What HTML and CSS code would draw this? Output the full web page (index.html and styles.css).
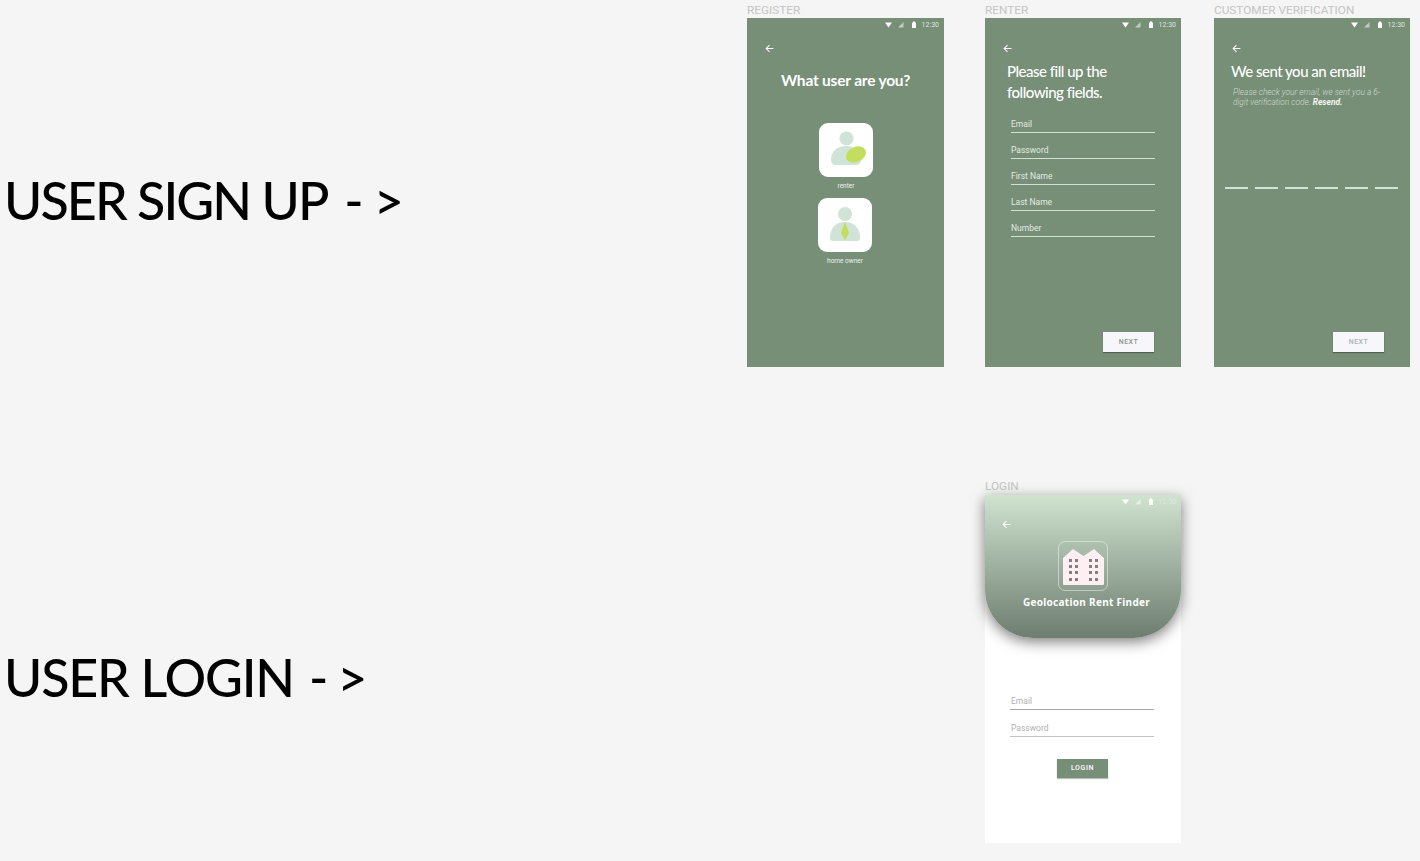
FILE: index.html
```html
<!DOCTYPE html>
<html>
<head>
  <meta charset="utf-8">
  <title>Geolocation Rent Finder</title>
  <link rel="stylesheet" href="styles.css">
</head>
<body>
  <svg class="defs" width="0" height="0">
    <symbol id="status" viewBox="0 0 31 8">
      <path d="M0 1.500h7L3.500 6.500z" fill="#fff"/>
      <path d="M13 6.500l5.500-5.500v5.500z" fill="#fff" opacity=".55"/>
      <path d="M27 1.500h1v-1h2v1h1v5.500h-4z" fill="#fff"/>
    </symbol>
    <symbol id="back" viewBox="0 0 8 8">
      <path d="M7.500 4H1.200M4 1L1 4l3 3" fill="none" stroke="#fff" stroke-width=".9"/>
    </symbol>
  </svg>

  <h2 class="caption caption-signup">USER SIGN UP <span class="arrow">-&gt;</span></h2>
  <h2 class="caption caption-login">USER LOGIN <span class="arrow">-&gt;</span></h2>

  <section class="board board-register">
    <div class="board-label">REGISTER</div>
    <div class="screen screen-green">
      <div class="status"><svg class="status-icons"><use href="#status"/></svg><span>12:30</span></div>
      <svg class="back"><use href="#back"/></svg>
      <h1 class="ask">What user are you?</h1>
      <div class="choice">
        <div class="tile">
          <svg width="54" height="54" viewBox="0 0 54 54">
            <circle cx="27.500" cy="15.500" r="7" fill="#cfe3d6"/>
            <path d="M12 37c0-9 6.500-14 15-14s15 5 15 14c0 3-2 5-5 5H17c-3 0-5-2-5-5z" fill="#cfe3d6"/>
            <ellipse cx="37" cy="31.500" rx="10.500" ry="7.500" transform="rotate(-25 37 31.500)" fill="#c3dd5c"/>
          </svg>
        </div>
        <span class="tile-name">renter</span>
      </div>
      <div class="choice choice-owner">
        <div class="tile">
          <svg width="54" height="54" viewBox="0 0 54 54">
            <circle cx="27" cy="16" r="7" fill="#cfe3d6"/>
            <path d="M12 40c0-10 6-16 15-16s15 6 15 16c0 2-1 3-3 3H15c-2 0-3-1-3-3z" fill="#cfe3d6"/>
            <path d="M27 24l4 11-4 7-4-7z" fill="#c3dd5c"/>
          </svg>
        </div>
        <span class="tile-name">home owner</span>
      </div>
    </div>
  </section>

  <section class="board board-renter">
    <div class="board-label">RENTER</div>
    <div class="screen screen-green">
      <div class="status"><svg class="status-icons"><use href="#status"/></svg><span>12:30</span></div>
      <svg class="back"><use href="#back"/></svg>
      <h1 class="title">Please fill up the<br>following fields.</h1>
      <div class="fields">
        <div class="field">Email</div>
        <div class="field">Password</div>
        <div class="field">First Name</div>
        <div class="field">Last Name</div>
        <div class="field">Number</div>
      </div>
      <div class="next">NEXT</div>
    </div>
  </section>

  <section class="board board-verify">
    <div class="board-label">CUSTOMER VERIFICATION</div>
    <div class="screen screen-green">
      <div class="status"><svg class="status-icons"><use href="#status"/></svg><span>12:30</span></div>
      <svg class="back"><use href="#back"/></svg>
      <h1 class="title title-verify">We sent you an email!</h1>
      <p class="hint">Please check your email, we sent you a 6-<br>digit verification code. <b>Resend.</b></p>
      <div class="code"><i></i><i></i><i></i><i></i><i></i><i></i></div>
      <div class="next next-dim">NEXT</div>
    </div>
  </section>

  <section class="board board-login">
    <div class="board-label">LOGIN</div>
    <div class="screen screen-white">
      <header class="hero">
        <div class="status"><svg class="status-icons"><use href="#status"/></svg><span>12:30</span></div>
        <svg class="back"><use href="#back"/></svg>
        <div class="logo">
          <svg width="41" height="36" viewBox="0 0 41 36">
            <path d="M0 35V9L10 0l10.500 7L31 0l10 9v26q0 1-1 1H1q-1 0-1-1z" fill="#fdeff2"/>
            <g fill="#857f80">
              <rect x="6" y="10" width="3" height="3"/><rect x="12" y="10" width="3" height="3"/><rect x="26" y="10" width="3" height="3"/><rect x="32" y="10" width="3" height="3"/>
              <rect x="6" y="16" width="3" height="3"/><rect x="12" y="16" width="3" height="3"/><rect x="26" y="16" width="3" height="3"/><rect x="32" y="16" width="3" height="3"/>
              <rect x="6" y="22" width="3" height="3"/><rect x="12" y="22" width="3" height="3"/><rect x="26" y="22" width="3" height="3"/><rect x="32" y="22" width="3" height="3"/>
              <rect x="6" y="29" width="3" height="3"/><rect x="12" y="29" width="3" height="3"/><rect x="26" y="29" width="3" height="3"/><rect x="32" y="29" width="3" height="3"/>
            </g>
          </svg>
        </div>
        <div class="app-name">Geolocation Rent Finder</div>
      </header>
      <div class="fields fields-login">
        <div class="field">Email</div>
        <div class="field">Password</div>
      </div>
      <div class="login-btn">LOGIN</div>
    </div>
  </section>
</body>
</html>
```

FILE: styles.css
```css
html, body {
  margin: 0;
  height: 861px;
  overflow: hidden;
}
body {
  position: relative;
  background: #f5f5f5;
  font-family: Roboto, sans-serif;
}
.defs {
  position: absolute;
}

.caption {
  position: absolute;
  left: 4px;
  margin: 0;
  font-family: Lato, sans-serif;
  font-size: 52px;
  line-height: 60px;
  font-weight: 500;
  letter-spacing: -1.200px;
  color: #000;
  white-space: nowrap;
}
.caption-signup {
  top: 170px;
  letter-spacing: -1.900px;
}
.caption-login {
  top: 647px;
}
.arrow {
  margin-left: 3px;
  letter-spacing: 9px;
}
.caption-signup .arrow {
  margin-left: 7px;
  letter-spacing: 10px;
}

/* artboards sit on a free canvas */
.board {
  position: absolute;
  width: 196px;
}
.board-register {
  left: 747px;
  top: 3px;
  width: 197px;
}
.board-renter {
  left: 985px;
  top: 3px;
}
.board-verify {
  left: 1214px;
  top: 3px;
}
.board-login {
  left: 985px;
  top: 479px;
}
.board-label {
  height: 15px;
  font-size: 11.800px;
  line-height: 15px;
  color: #c4c4c4;
  white-space: nowrap;
}
.board-login .board-label {
  height: 16px;
}

.screen {
  position: relative;
  height: 349px;
}
.board-login .screen {
  height: 348px;
}
.screen-green {
  background: #778e77;
  color: #fff;
}
.screen-white {
  background: #fff;
}

.status {
  display: flex;
  justify-content: flex-end;
  align-items: center;
  height: 14px;
  padding: 0 5px 0 0;
  font-size: 7px;
  color: #dfe8df;
}
.status-icons {
  width: 31px;
  height: 8px;
  margin-right: 6px;
}
.back {
  display: block;
  width: 9px;
  height: 9px;
  margin: 12px 0 0 18px;
}

.ask {
  margin: 17px 0 0;
  font-family: Lato, sans-serif;
  font-size: 15.500px;
  line-height: 20px;
  font-weight: 700;
  letter-spacing: -.2px;
  text-align: center;
}
.choice {
  display: flex;
  flex-direction: column;
  align-items: center;
  margin: 33px 0 0 1px;
}
.choice-owner {
  margin: 8px 1px 0 0;
}
.tile {
  width: 54px;
  height: 54px;
  background: #fff;
  border-radius: 9px;
}
.tile svg {
  display: block;
}
.tile-name {
  margin-top: 5px;
  font-size: 6.500px;
  line-height: 8px;
  color: #eef3ee;
}

.title {
  margin: 8px 0 0 22px;
  font-family: Lato, sans-serif;
  font-size: 15px;
  line-height: 21px;
  font-weight: 500;
  letter-spacing: -.5px;
}
.title-verify {
  margin-left: 17px;
}
.fields {
  display: flex;
  flex-direction: column;
  gap: 9px;
  margin: 13px 26px 0;
}
.field {
  height: 16px;
  border-bottom: 1px solid #d3dfd3;
  font-size: 8.500px;
  line-height: 16px;
  color: #e3ebe3;
}
.next {
  position: absolute;
  right: 27px;
  bottom: 15px;
  width: 51px;
  height: 20px;
  background: #f6f6fb;
  box-shadow: 0 1px 1px rgba(0, 0, 0, .3);
  font-size: 7px;
  font-weight: 500;
  line-height: 20px;
  letter-spacing: .5px;
  text-align: center;
  color: #8a9a8a;
}
.next-dim {
  right: 26px;
  color: #a9b5a9;
}
.hint {
  margin: 5px 0 0 19px;
  font-size: 8.400px;
  line-height: 10px;
  font-style: italic;
  font-weight: 300;
  white-space: nowrap;
  color: #cfdccf;
}
.hint b {
  font-weight: 700;
  color: #f2f6f2;
}
.code {
  display: flex;
  gap: 7px;
  margin: 80px 0 0 11px;
}
.code i {
  width: 23px;
  height: 2px;
  background: #cfe3d6;
}

.hero {
  height: 143px;
  border-radius: 0 0 48px 48px;
  background: linear-gradient(#cfe3cf, #6d7d70);
  box-shadow: 0 4px 14px rgba(0, 0, 0, .5);
  color: #fff;
}
.hero .back {
  margin: 11px 0 0 17px;
}
.logo {
  display: flex;
  justify-content: center;
  align-items: flex-end;
  box-sizing: border-box;
  width: 50px;
  height: 50px;
  margin: 12px 0 0 73px;
  padding-bottom: 5px;
  border: 1px solid rgba(255, 255, 255, .45);
  border-radius: 7px;
}
.app-name {
  margin: 4px 0 0 7px;
  font-family: "Noto Sans", sans-serif;
  font-size: 10px;
  line-height: 14px;
  font-weight: 700;
  letter-spacing: .3px;
  text-align: center;
}
.fields-login {
  margin: 54px 27px 0 25px;
}
.fields-login .field {
  height: 17px;
  padding-left: 1px;
  border-bottom-color: #a8a8a8;
  line-height: 18px;
  color: #b0b0b0;
}
.fields-login .field + .field {
  border-bottom-color: #c4c4c4;
}
.login-btn {
  width: 51px;
  height: 19px;
  margin: 22px 0 0 72px;
  background: #778e77;
  box-shadow: 0 1px 1px rgba(0, 0, 0, .25);
  font-size: 7px;
  font-weight: 500;
  line-height: 19px;
  letter-spacing: .6px;
  text-align: center;
  color: #fff;
}
```
